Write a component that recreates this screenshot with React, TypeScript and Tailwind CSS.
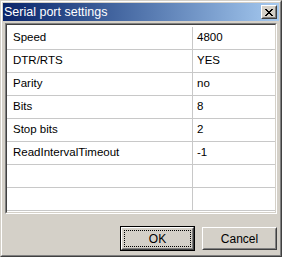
import React from 'react';

const rows: [string, string][] = [
  ['Speed', '4800'],
  ['DTR/RTS', 'YES'],
  ['Parity', 'no'],
  ['Bits', '8'],
  ['Stop bits', '2'],
  ['ReadIntervalTimeout', '-1'],
  ['', ''],
  ['', ''],
];

const CloseGlyph = () => (
  <svg width="8" height="7" viewBox="0 0 8 7" shapeRendering="crispEdges">
    <path d="M0 0h2v1h-2zM6 0h2v1h-2zM1 1h2v1h-2zM5 1h2v1h-2zM2 2h4v1h-4zM3 3h2v1h-2zM2 4h4v1h-4zM1 5h2v1h-2zM5 5h2v1h-2zM0 6h2v1h-2zM6 6h2v1h-2z" fill="#000" />
  </svg>
);

export default function App() {
  return (
    <div
      className="w-[282px] h-[257px] bg-[#d4d0c8] border border-t-[#d4d0c8] border-l-[#d4d0c8] border-b-[#404040] border-r-[#404040] text-black"
      style={{ fontFamily: '"Liberation Sans", Arial, sans-serif' }}
    >
      <div className="h-full border border-t-white border-l-white border-b-[#808080] border-r-[#808080] p-px flex flex-col">
        {/* title bar */}
        <div className="h-[18px] shrink-0 flex items-center justify-between bg-gradient-to-r from-[#0a246a] to-[#a6caf0] pl-px pr-[2px]">
          <span className="text-white text-[12.5px] leading-none">Serial port settings</span>
          <div className="w-[16px] h-[14px] bg-[#d4d0c8] border border-t-white border-l-white border-b-[#404040] border-r-[#404040] flex">
            <div className="flex-1 border border-t-[#d4d0c8] border-l-[#d4d0c8] border-b-[#808080] border-r-[#808080] flex items-center justify-center">
              <CloseGlyph />
            </div>
          </div>
        </div>

        {/* grid */}
        <div className="mt-[2px] mx-[2px] border border-t-[#808080] border-l-[#808080] border-b-white border-r-white">
          <div className="border border-t-[#404040] border-l-[#404040] border-b-[#d4d0c8] border-r-[#d4d0c8] bg-white pt-[2px] pb-px">
            {rows.map(([k, v], i) => (
              <div key={i} className="flex h-[23px] border-b border-[#c8c8c8] text-[11.5px] leading-none">
                <div className="w-[186px] shrink-0 border-r border-[#c8c8c8] flex items-center pl-[6px]">{k}</div>
                <div className="flex-1 flex items-center pl-[4px]">{v}</div>
              </div>
            ))}
          </div>
        </div>

        {/* buttons */}
        <div className="flex-1 flex items-end justify-end gap-[7px] pr-[2px] pb-[3px] text-[12px]">
          <div className="w-[75px] h-[25px] border border-black flex">
            <div className="flex-1 border border-t-white border-l-white border-b-[#404040] border-r-[#404040] flex">
              <div className="flex-1 border border-t-[#d4d0c8] border-l-[#d4d0c8] border-b-[#808080] border-r-[#808080] p-px flex">
                <div className="flex-1 border border-dotted border-black flex items-center justify-center">OK</div>
              </div>
            </div>
          </div>
          <div className="w-[75px] h-[23px] mb-px border border-t-white border-l-white border-b-[#404040] border-r-[#404040] flex">
            <div className="flex-1 border border-t-[#d4d0c8] border-l-[#d4d0c8] border-b-[#808080] border-r-[#808080] flex items-center justify-center">
              Cancel
            </div>
          </div>
        </div>
      </div>
    </div>
  );
}
